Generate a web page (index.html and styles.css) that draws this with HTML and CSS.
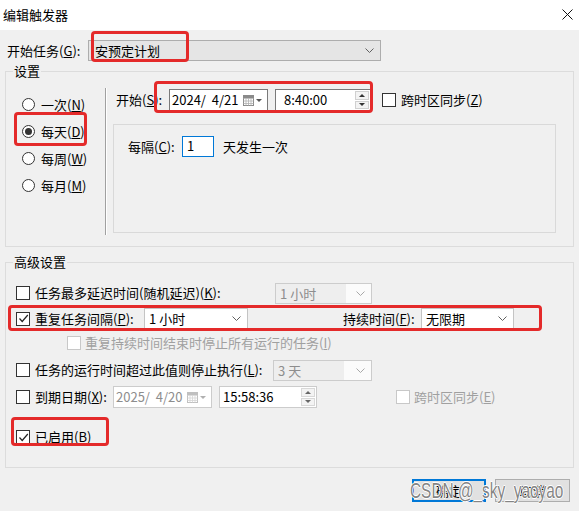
FILE: index.html
```html
<!DOCTYPE html>
<html lang="zh">
<head>
<meta charset="utf-8">
<title>编辑触发器</title>
<link rel="stylesheet" href="styles.css">
</head>
<body>
<div class="titlebar">
  <span class="title">编辑触发器</span>
  <svg class="close" width="11" height="11" viewBox="0 0 11 11"><path d="M0.5 0.5L10.5 10.5M10.5 0.5L0.5 10.5" stroke="#111" stroke-width="1" fill="none"/></svg>
</div>
<div class="main">
  <div class="task-row">
    <span class="task-lbl">开始任务(<u>G</u>):</span>
    <div class="select task-select"><span class="val">安预定计划</span><svg class="chev" width="9" height="5" viewBox="0 0 9 5"><path d="M0.5 0.5L4.5 4.5L8.5 0.5" stroke="#606060" fill="none"/></svg></div>
  </div>

  <div class="group settings">
    <span class="group-title">设置</span>
    <div class="radios">
      <div class="radio-row"><span class="radio"></span><span>一次(<u>N</u>)</span></div>
      <div class="radio-row"><span class="radio on"></span><span>每天(<u>D</u>)</span></div>
      <div class="radio-row"><span class="radio"></span><span>每周(<u>W</u>)</span></div>
      <div class="radio-row"><span class="radio"></span><span>每月(<u>M</u>)</span></div>
    </div>
    <div class="vsep"></div>
    <div class="sched">
      <div class="start-row">
        <span class="start-lbl">开始(<u>S</u>):</span>
        <div class="field date"><span class="val">2024/  4/21</span>
          <svg class="cal" width="20" height="11" viewBox="0 0 20 11"><rect x="0.5" y="0.5" width="10" height="10" fill="#fff" stroke="#8a8a8a"/><path d="M0.5 3.5H10.5M0.5 6H10.5M0.5 8.5H10.5M3 3.5V10.5M5.5 3.5V10.5M8 3.5V10.5" stroke="#b0b0b0" stroke-width="0.8"/><rect x="0.5" y="0.5" width="10" height="2.5" fill="#8a8a8a"/><path d="M13 4H19L16 7Z" fill="#555"/></svg>
        </div>
        <div class="field time"><span class="val">8:40:00</span>
          <div class="spin"><span class="up"></span><span class="down"></span></div>
        </div>
        <span class="check cb-start"></span><span class="cb-lbl">跨时区同步(<u>Z</u>)</span>
      </div>
      <div class="inner">
        <div class="every-row">
          <span class="every-lbl">每隔(<u>C</u>):</span>
          <div class="num">1</div>
          <span>天发生一次</span>
        </div>
      </div>
    </div>
  </div>

  <div class="group advanced">
    <span class="group-title">高级设置</span>
    <div class="adv-row r1">
      <span class="check"></span>
      <span class="adv-lbl w1">任务最多延迟时间(随机延迟)(<u>K</u>):</span>
      <div class="select dis sel-delay"><span class="val">1 小时</span><svg class="chev" width="9" height="5" viewBox="0 0 9 5"><path d="M0.5 0.5L4.5 4.5L8.5 0.5" stroke="#a8a8a8" fill="none"/></svg></div>
    </div>
    <div class="adv-row r2">
      <span class="check on"><svg width="11" height="11" viewBox="0 0 11 11"><path d="M1.5 5.5L4.2 8.5L9.8 2" stroke="#222" stroke-width="1.2" fill="none"/></svg></span>
      <span class="adv-lbl w2">重复任务间隔(<u>P</u>):</span>
      <div class="select white sel-int"><span class="val">1 小时</span><svg class="chev" width="9" height="5" viewBox="0 0 9 5"><path d="M0.5 0.5L4.5 4.5L8.5 0.5" stroke="#606060" fill="none"/></svg></div>
      <span class="dur-lbl">持续时间(<u>F</u>):</span>
      <div class="select white sel-dur"><span class="val">无限期</span><svg class="chev" width="9" height="5" viewBox="0 0 9 5"><path d="M0.5 0.5L4.5 4.5L8.5 0.5" stroke="#606060" fill="none"/></svg></div>
    </div>
    <div class="adv-row r3">
      <span class="check dis"></span>
      <span class="dis-text">重复持续时间结束时停止所有运行的任务(<u>I</u>)</span>
    </div>
    <div class="adv-row r4">
      <span class="check"></span>
      <span class="adv-lbl w4">任务的运行时间超过此值则停止执行(<u>L</u>):</span>
      <div class="select dis sel-stop"><span class="val">3 天</span><svg class="chev" width="9" height="5" viewBox="0 0 9 5"><path d="M0.5 0.5L4.5 4.5L8.5 0.5" stroke="#a8a8a8" fill="none"/></svg></div>
    </div>
    <div class="adv-row r5">
      <span class="check"></span>
      <span class="adv-lbl w5">到期日期(<u>X</u>):</span>
      <div class="field date dis exp-date"><span class="val">2025/  4/20</span>
        <svg class="cal" width="20" height="11" viewBox="0 0 20 11"><rect x="0.5" y="0.5" width="10" height="10" fill="#fff" stroke="#c0c0c0"/><path d="M0.5 3.5H10.5M0.5 6H10.5M0.5 8.5H10.5M3 3.5V10.5M5.5 3.5V10.5M8 3.5V10.5" stroke="#d4d4d4" stroke-width="0.8"/><rect x="0.5" y="0.5" width="10" height="2.5" fill="#c0c0c0"/><path d="M13 4H19L16 7Z" fill="#b0b0b0"/></svg>
      </div>
      <div class="field time exp-time"><span class="val">15:58:36</span>
        <div class="spin"><span class="up"></span><span class="down"></span></div>
      </div>
      <span class="check dis cb-tz"></span><span class="dis-text">跨时区同步(<u>E</u>)</span>
    </div>
    <div class="adv-row r6">
      <span class="check on"><svg width="11" height="11" viewBox="0 0 11 11"><path d="M1.5 5.5L4.2 8.5L9.8 2" stroke="#222" stroke-width="1.2" fill="none"/></svg></span>
      <span class="adv-lbl">已启用(<u>B</u>)</span>
    </div>
  </div>

  <div class="buttons">
    <button class="btn primary">确定</button>
    <button class="btn">取消</button>
  </div>
</div>

<div class="mark m1"></div>
<div class="mark m2"></div>
<div class="mark m3"></div>
<div class="mark m4"></div>
<div class="mark m5"></div>
<div class="watermark">CSDN @_sky_yaoyao</div>
</body>
</html>
```

FILE: styles.css
```css
* { box-sizing: border-box; }
html, body { margin: 0; padding: 0; }
body {
  width: 579px;
  height: 511px;
  overflow: hidden;
  position: relative;
  background: #f0f0f0;
  font-family: "Noto Sans CJK SC", "Noto Sans", sans-serif;
  font-size: 13px;
  line-height: 16px;
  color: #000;
}
u { text-decoration: underline; text-underline-offset: 1px; }

.titlebar {
  height: 30px;
  background: #fff;
  display: flex;
  align-items: center;
  justify-content: space-between;
  padding: 0 6px 0 3px;
}
.title { font-size: 13px; }
.close { display: block; margin-top: -2px; }

.main { padding: 0 5px; }

.task-row {
  display: flex;
  align-items: center;
  height: 21px;
  margin-top: 10px;
}
.task-lbl { width: 83px; padding-left: 2px; }

.select {
  display: flex;
  align-items: center;
  justify-content: space-between;
  height: 21px;
  border: 1px solid #adadad;
  background: #e5e5e5;
  padding: 0 6px 0 6px;
}
.select .chev { display: block; }
.task-select { width: 293px; }

.group {
  position: relative;
  border: 1px solid #dcdcdc;
}
.group-title {
  position: absolute;
  top: -9px;
  left: 7px;
  padding: 0 1px;
  background: #f0f0f0;
  line-height: 16px;
}

.settings {
  margin-top: 10px;
  height: 176px;
  display: flex;
}
.radios {
  width: 99px;
  padding: 19px 0 0 16px;
}
.radio-row {
  display: flex;
  align-items: center;
  height: 27px;
  gap: 6px;
}
.radio {
  width: 13px;
  height: 13px;
  border: 1px solid #333;
  border-radius: 50%;
  background: #fff;
  display: flex;
  align-items: center;
  justify-content: center;
}
.radio.on::after {
  content: "";
  width: 7px;
  height: 7px;
  border-radius: 50%;
  background: #333;
}
.vsep {
  width: 2px;
  height: 147px;
  margin-top: 16px;
  border-left: 1px solid #a0a0a0;
  border-right: 1px solid #fff;
}
.sched { flex: 1; }
.start-row {
  display: flex;
  align-items: center;
  height: 22px;
  margin: 17px 0 0 9px;
}
.start-lbl { width: 53px; }

.field {
  display: flex;
  align-items: center;
  justify-content: space-between;
  height: 22px;
  border: 1px solid #7a7a7a;
  background: #fff;
}
.field .val { white-space: pre; }
.date { width: 99px; padding: 0 4px 0 2px; }
.date .cal { display: block; }
.time { width: 96px; margin-left: 7px; padding: 0 1px 0 8px; }
.spin {
  width: 14px;
  height: 18px;
  display: flex;
  flex-direction: column;
  gap: 1px;
}
.spin span {
  flex: 1;
  border: 1px solid #d0d0d0;
  background: #f3f3f3;
  display: flex;
  align-items: center;
  justify-content: center;
}
.spin .up::after {
  content: "";
  border-left: 3px solid transparent;
  border-right: 3px solid transparent;
  border-bottom: 3px solid #333;
}
.spin .down::after {
  content: "";
  border-left: 3px solid transparent;
  border-right: 3px solid transparent;
  border-top: 3px solid #333;
}

.check {
  width: 14px;
  height: 14px;
  flex: none;
  border: 1px solid #333;
  background: #fff;
  display: flex;
  align-items: center;
  justify-content: center;
}
.check svg { display: block; }
.check.dis { border-color: #c8c8c8; }
.cb-start { margin-left: 11px; }
.cb-lbl { margin-left: 5px; }

.inner {
  margin: 13px 0 0 6px;
  width: 443px;
  height: 109px;
  border: 1px solid #d9d9d9;
}
.every-row {
  display: flex;
  align-items: center;
  height: 21px;
  margin: 11px 0 0 14px;
}
.every-lbl { width: 54px; }
.num {
  width: 32px;
  height: 21px;
  border: 1px solid #0078d7;
  background: #fff;
  padding: 1px 0 0 4px;
  margin-right: 9px;
}

.advanced {
  margin-top: 15px;
  height: 206px;
  padding-left: 10px;
}
.adv-row {
  display: flex;
  align-items: center;
}
.adv-row > .check + .adv-lbl { margin-left: 5px; }
.r1 { margin-top: 19px; height: 22px; }
.r2 { margin-top: 4px; height: 21px; }
.r3 { margin-top: 6px; height: 16px; padding-left: 51px; }
.r4 { margin-top: 8px; height: 22px; }
.r5 { margin-top: 5px; height: 22px; }
.r6 { margin-top: 21px; height: 16px; }
.w1 { width: 240px; }
.w2 { width: 109px; }
.w4 { width: 238px; }
.w5 { width: 78px; }

.select.white { background: #fff; border-color: #c4c4c4; padding-left: 4px; }
.select.dis {
  background: #fbfbfb;
  border-color: #cccccc;
  color: #8d8d8d;
  padding-left: 0;
}
.select.dis .val {
  background: #eeeeee;
  height: 19px;
  line-height: 19px;
  padding-left: 4px;
  width: 70px;
}
.sel-delay { width: 97px; }
.sel-int { width: 104px; }
.dur-lbl { margin-left: 95px; width: 78px; }
.sel-dur { width: 93px; }
.sel-stop { width: 99px; }

.dis-text { color: #a0a0a0; margin-left: 4px; }
.field.dis { border-color: #cccccc; color: #8d8d8d; }
.exp-date { width: 99px; }
.exp-time { width: 98px; border-color: #cccccc; padding-left: 3px; }
.exp-time .spin span { border-color: #d8d8d8; }
.exp-time .spin .up::after { border-bottom-color: #666; }
.exp-time .spin .down::after { border-top-color: #666; }
.cb-tz { margin-left: 79px; }

.buttons {
  display: flex;
  justify-content: flex-end;
  gap: 9px;
  margin: 11px 4px 0 0;
}
.btn {
  width: 75px;
  height: 23px;
  border: 1px solid #adadad;
  background: #e1e1e1;
  font: inherit;
  color: #000;
  padding: 0;
}
.btn.primary { width: 74px; border: 2px solid #0078d7; }

.mark {
  position: absolute;
  border: 3px solid #e42a2a;
  border-radius: 4px;
}
.m1 { left: 91px; top: 31px; width: 98px; height: 31px; }
.m2 { left: 154px; top: 81px; width: 219px; height: 32px; }
.m3 { left: 14px; top: 112px; width: 73px; height: 34px; }
.m4 { left: 8px; top: 305px; width: 534px; height: 26px; }
.m5 { left: 11px; top: 417px; width: 98px; height: 29px; }

.watermark {
  position: absolute;
  left: 410px;
  top: 478px;
  font-family: "Liberation Sans", Arial, sans-serif;
  font-size: 22px;
  line-height: 26px;
  color: rgba(110, 110, 110, 0.85);
  white-space: nowrap;
  transform: scaleX(0.7);
  transform-origin: 0 0;
  text-shadow: 1px 0 0 #fff, -1px 0 0 #fff, 0 1px 0 #fff, 0 -1px 0 #fff;
}
```
